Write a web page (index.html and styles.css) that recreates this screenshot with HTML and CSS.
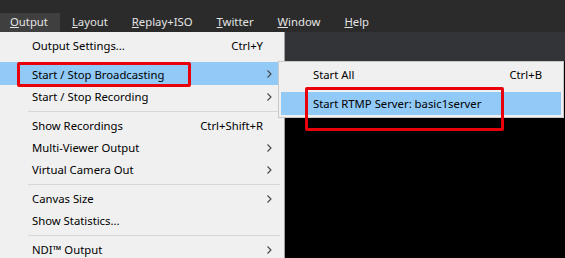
FILE: index.html
```html
<!DOCTYPE html>
<html lang="en">
<head>
    <meta charset="UTF-8">
    <title>Output menu</title>
    <link rel="stylesheet" href="styles.css">
</head>
<body>
    <div class="menubar">
        <div class="bar-item open"><u>O</u>utput</div>
        <div class="bar-item"><u>L</u>ayout</div>
        <div class="bar-item"><u>R</u>eplay+ISO</div>
        <div class="bar-item"><u>T</u>witter</div>
        <div class="bar-item"><u>W</u>indow</div>
        <div class="bar-item"><u>H</u>elp</div>
    </div>

    <div class="workspace">
        <div class="menu">
            <div class="row"><span class="label">Output Settings...</span><span class="key">Ctrl+Y</span><span class="sub"></span></div>
            <div class="gap"></div>
            <div class="row active"><span class="label">Start / Stop Broadcasting</span><span class="sub"><svg width="5" height="8" viewBox="0 0 5 8"><polyline points="0.5,0.5 4,4 0.5,7.5" fill="none" stroke="#444" stroke-width="1.1"/></svg></span></div>
            <div class="row"><span class="label">Start / Stop Recording</span><span class="sub"><svg width="5" height="8" viewBox="0 0 5 8"><polyline points="0.5,0.5 4,4 0.5,7.5" fill="none" stroke="#444" stroke-width="1.1"/></svg></span></div>
            <div class="sep"></div>
            <div class="row"><span class="label">Show Recordings</span><span class="key">Ctrl+Shift+R</span><span class="sub"></span></div>
            <div class="row"><span class="label">Multi-Viewer Output</span><span class="sub"><svg width="5" height="8" viewBox="0 0 5 8"><polyline points="0.5,0.5 4,4 0.5,7.5" fill="none" stroke="#444" stroke-width="1.1"/></svg></span></div>
            <div class="row"><span class="label">Virtual Camera Out</span><span class="sub"><svg width="5" height="8" viewBox="0 0 5 8"><polyline points="0.5,0.5 4,4 0.5,7.5" fill="none" stroke="#444" stroke-width="1.1"/></svg></span></div>
            <div class="sep"></div>
            <div class="row"><span class="label">Canvas Size</span><span class="sub"><svg width="5" height="8" viewBox="0 0 5 8"><polyline points="0.5,0.5 4,4 0.5,7.5" fill="none" stroke="#444" stroke-width="1.1"/></svg></span></div>
            <div class="row"><span class="label">Show Statistics...</span><span class="sub"></span></div>
            <div class="sep"></div>
            <div class="row"><span class="label">NDI™ Output</span><span class="sub"><svg width="5" height="8" viewBox="0 0 5 8"><polyline points="0.5,0.5 4,4 0.5,7.5" fill="none" stroke="#444" stroke-width="1.1"/></svg></span></div>
        </div>

        <div class="stage">
            <div class="toolbar"></div>
            <div class="preview"></div>
        </div>

        <div class="menu submenu">
            <div class="row"><span class="label">Start All</span><span class="key">Ctrl+B</span><span class="sub"></span></div>
            <div class="gap"></div>
            <div class="row active"><span class="label">Start RTMP Server: basic1server</span><span class="sub"></span></div>
        </div>

        <div class="mark mark-broadcast"></div>
        <div class="mark mark-rtmp"></div>
    </div>
</body>
</html>
```

FILE: styles.css
```css
body {
    margin: 0;
    background: #000;
    font-family: "Noto Sans", sans-serif;
    font-size: 11.3px;
    overflow: hidden;
}
.menubar {
    height: 32px;
    display: flex;
    align-items: flex-end;
    background: #2b2b2b;
    color: #e4e4e4;
}
.bar-item {
    height: 19px;
    line-height: 18px;
    padding: 0 12px;
}
.bar-item:first-child {
    padding-left: 10px;
}
.bar-item.open {
    background: #3f3f3f;
}
.workspace {
    position: relative;
    display: flex;
    height: 226px;
}
.menu {
    width: 285px;
    flex-shrink: 0;
    box-sizing: border-box;
    padding: 2px 2px 2px 0;
    background: #f0f0f0;
    border-right: 1px solid #a0a0a0;
    color: #000;
}
.row {
    display: flex;
    align-items: center;
    height: 22px;
    padding-top: 1px;
    padding-left: 32px;
    box-sizing: border-box;
}
.row.active {
    height: 23px;
    background: #91c9f7;
}
.label {
    flex: 1;
    white-space: nowrap;
}
.key {
    white-space: nowrap;
}
.sub {
    width: 19px;
    display: flex;
    justify-content: flex-start;
    padding-left: 4px;
    box-sizing: border-box;
}
.gap {
    height: 6px;
}
.sep {
    height: 1px;
    margin: 4px 2px 2px 28px;
    background: #d7d7d7;
}
.stage {
    flex: 1;
    display: flex;
    flex-direction: column;
}
.toolbar {
    height: 29px;
    background: #333438;
}
.preview {
    flex: 1;
    background: #000;
}
.submenu {
    position: absolute;
    left: 278px;
    top: 29px;
    width: 286px;
    padding: 1px 2px 2px 2px;
    border: 1px solid #c8c8c8;
}
.submenu .row {
    height: 23px;
    padding-top: 0;
}
.submenu .gap {
    height: 6px;
}
.mark {
    position: absolute;
    border: 3px solid #e8000b;
    border-radius: 2px;
    box-sizing: border-box;
}
.mark-broadcast {
    left: 17px;
    top: 30px;
    width: 174px;
    height: 25px;
}
.mark-rtmp {
    left: 305px;
    top: 55px;
    width: 199px;
    height: 44px;
}
```
